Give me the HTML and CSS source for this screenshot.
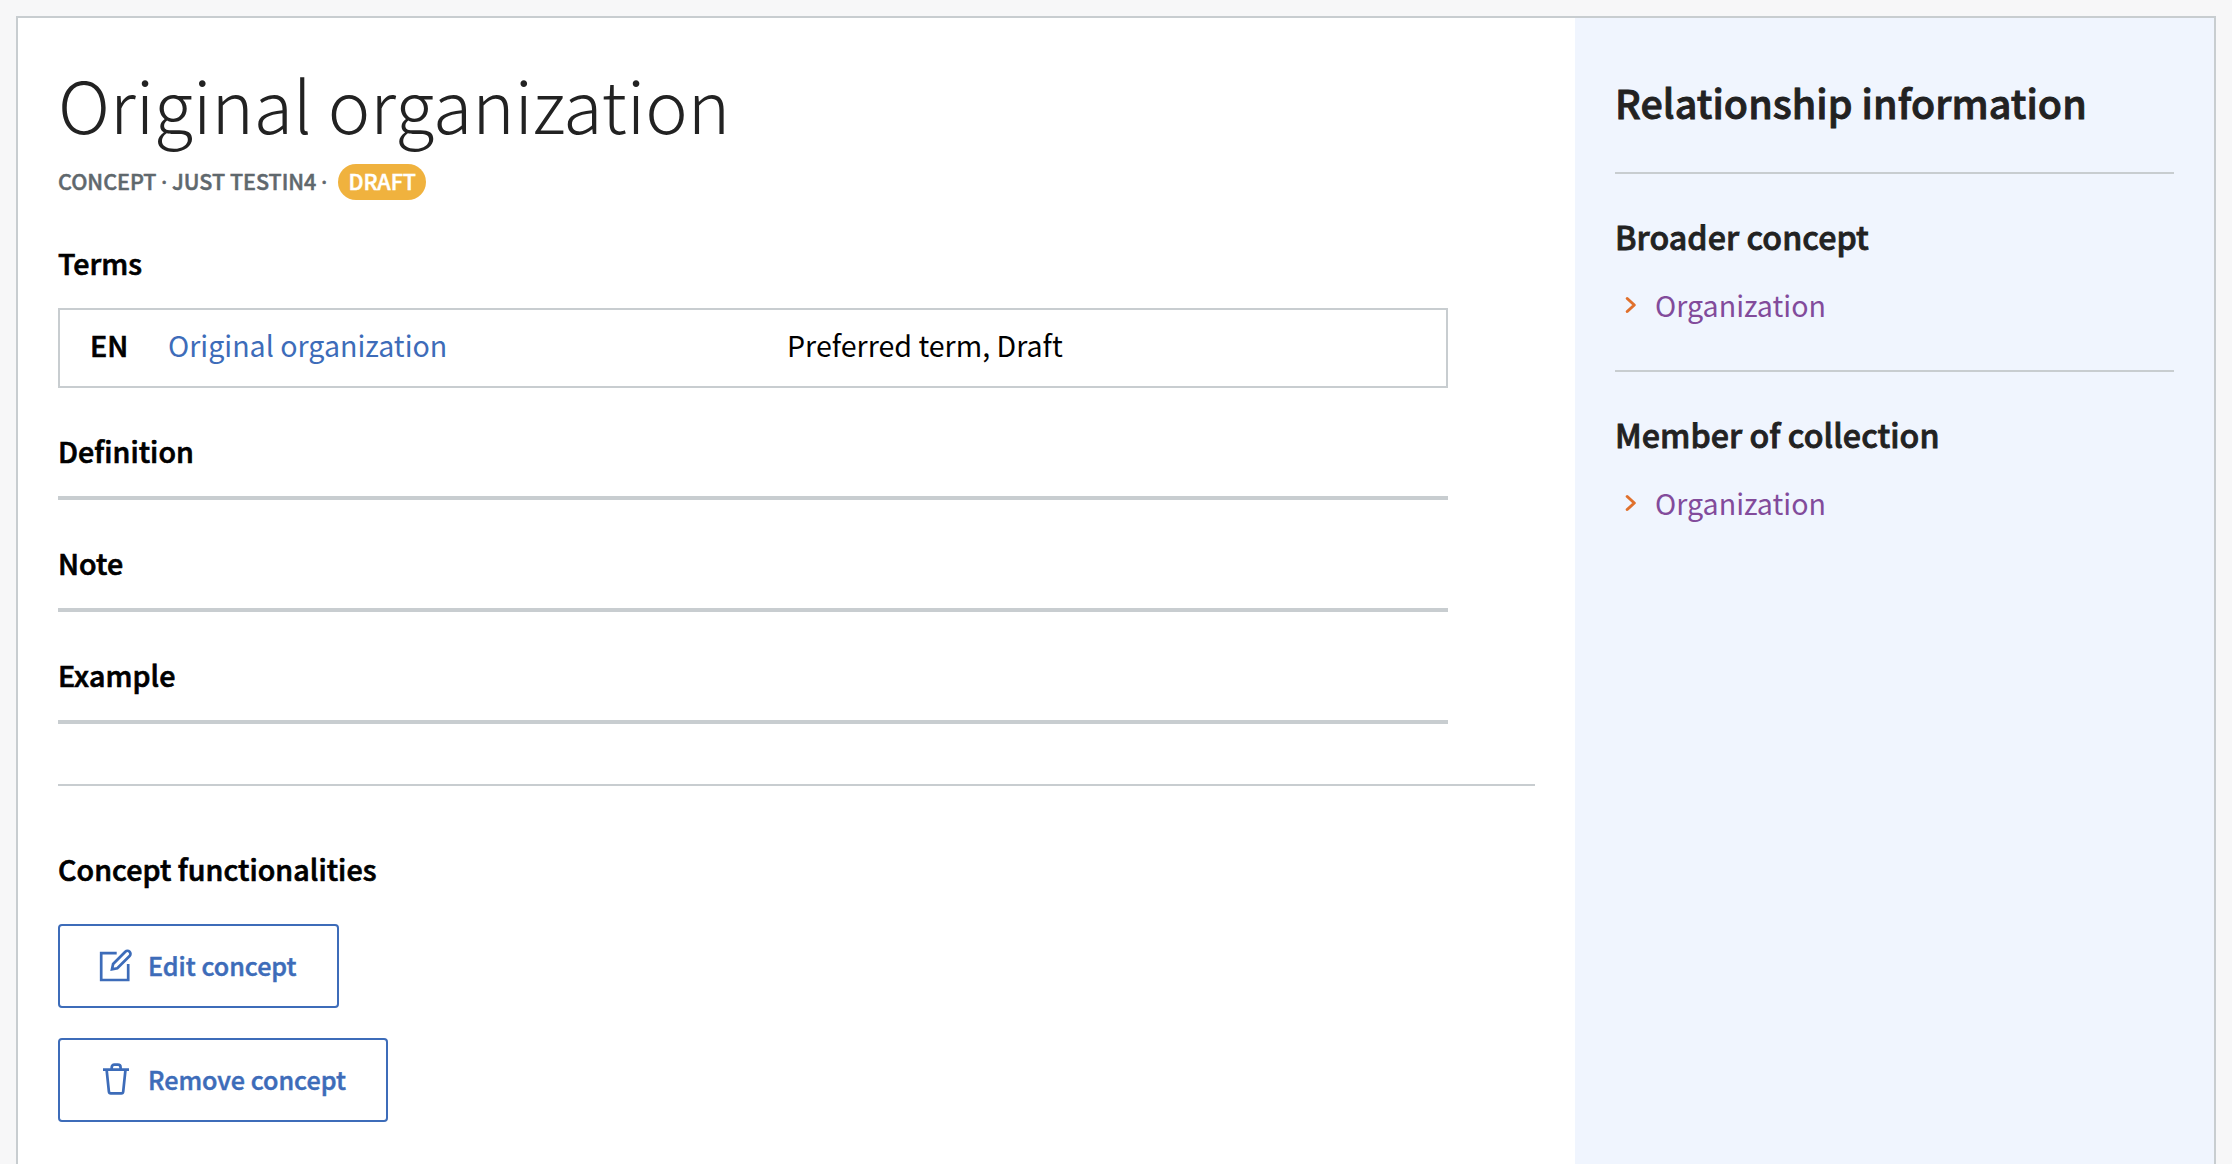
FILE: index.html
```html
<!DOCTYPE html>
<html lang="en">
<head>
<meta charset="utf-8">
<title>Original organization</title>
<link rel="stylesheet" href="styles.css">
</head>
<body>
<main class="page">
  <article class="content">
    <h1 class="title">Original organization</h1>
    <div class="meta">
      <span>CONCEPT <span class="dot">·</span> JUST TESTIN4 <span class="dot">·</span></span>
      <span class="badge">DRAFT</span>
    </div>
    <section class="block">
      <h2 class="label">Terms</h2>
      <div class="term">
        <b class="lang">EN</b>
        <a class="term-link">Original organization</a>
        <span>Preferred term, Draft</span>
      </div>
    </section>
    <section class="block empty"><h2 class="label">Definition</h2></section>
    <section class="block empty"><h2 class="label">Note</h2></section>
    <section class="block empty"><h2 class="label">Example</h2></section>
    <hr class="divider">
    <section class="actions">
      <h2 class="label">Concept functionalities</h2>
      <div class="buttons">
        <button class="btn"><svg class="icon" viewBox="0 0 34 34"><path d="M18.7 4.2H3.2V31h27V15"/><path d="M14 20.3l1.1-5.3L27.3 2.7a3 3 0 0 1 4.3 4.3L19.3 19.2z"/></svg><span class="btn-text">Edit concept</span></button>
        <button class="btn"><svg class="icon" viewBox="0 0 34 34"><path d="M5 6.7h26M13.7 6.5V4.5q0-2.8 2.8-2.8h3.3q2.8 0 2.8 2.8v2M8.7 7.5l2.2 21.2q.2 1.7 1.8 1.7h10.7q1.6 0 1.8-1.7L27.4 7.5"/></svg><span class="btn-text">Remove concept</span></button>
      </div>
    </section>
  </article>
  <aside class="side">
    <h2 class="side-title">Relationship information</h2>
    <section class="rel">
      <h3 class="rel-title">Broader concept</h3>
      <a class="rel-link"><svg class="chevron" viewBox="0 0 12 18"><path d="M2.2 2.5L9.3 9l-7.1 6.5"/></svg>Organization</a>
    </section>
    <section class="rel">
      <h3 class="rel-title">Member of collection</h3>
      <a class="rel-link"><svg class="chevron" viewBox="0 0 12 18"><path d="M2.2 2.5L9.3 9l-7.1 6.5"/></svg>Organization</a>
    </section>
  </aside>
</main>
</body>
</html>
```
FILE: styles.css
```css
* { box-sizing: border-box; margin: 0; padding: 0; }

body {
  height: 1164px;
  padding: 16px 16px 0;
  overflow: hidden;
  background: #f7f7f8;
  color: #000;
  font: 400 28.6px/40px "Noto Sans CJK JP", sans-serif;
}

.page {
  display: flex;
  height: 1148px;
  background: #fff;
  border: 2px solid #c8cdd0;
  border-bottom: 0;
}

.content { flex: 1; padding: 35px 40px 0; }

.title {
  font-weight: 200;
  font-size: 71.6px;
  line-height: 100px;
  color: #222;
}

.meta {
  display: flex;
  gap: 11px;
  margin-top: 11px;
  height: 36px;
  font-size: 21.5px;
  line-height: 34px;
  font-weight: 500;
  -webkit-text-stroke: 0.5px;
  color: #5f686d;
}

.dot { font-family: "Noto Sans", sans-serif; line-height: 1; }

.badge {
  padding: 0 10.5px;
  border-radius: 18px;
  background: #f0b23e;
  color: #fff;
  letter-spacing: -0.1px;
}

.label {
  padding-top: 1px;
  font-size: 28.6px;
  font-weight: 500;
  letter-spacing: 0.07px;
  -webkit-text-stroke: 0.7px;
}

.block { width: 1390px; margin-top: 42px; }

.empty { padding-bottom: 25px; border-bottom: 4px solid #c8cdd0; }

.term {
  display: grid;
  grid-template-columns: 78px 619px 1fr;
  align-items: center;
  height: 80px;
  margin-top: 25px;
  padding: 0 30px 6px;
  border: 2px solid #c8cdd0;
}

.lang {
  font-weight: 500;
  -webkit-text-stroke: 0.7px;
}

.term-link { color: #3d6cb9; }

.divider {
  margin-top: 60px;
  border: 0;
  border-top: 2px solid #c8cdd0;
}

.actions { margin-top: 62px; }

.buttons {
  display: flex;
  flex-direction: column;
  align-items: flex-start;
  gap: 30px;
  margin-top: 35px;
}

.btn {
  display: flex;
  align-items: center;
  gap: 16px;
  height: 84px;
  padding: 0 40px 0 38px;
  border: 2px solid #3d6cb9;
  border-radius: 4px;
  background: #fff;
  color: #3d6cb9;
  font: 500 25.1px/38px "Noto Sans CJK JP", sans-serif;
}

.btn-text {
  padding-bottom: 2px;
  -webkit-text-stroke: 0.5px;
}

.icon, .chevron { flex: none; fill: none; stroke: currentColor; }

.icon { width: 34px; height: 34px; stroke-width: 2.7; }

.side {
  width: 639px;
  padding: 60px 40px 0;
  background: #f0f5fe;
}

.side-title {
  padding-bottom: 46px;
  font-size: 39.4px;
  line-height: 48px;
  font-weight: 500;
  letter-spacing: 0.08px;
  -webkit-text-stroke: 0.9px;
  color: #222;
}

.rel {
  padding: 42px 0 45px;
  border-top: 2px solid #c8cdd0;
}

.rel-title {
  font-size: 32.2px;
  font-weight: 500;
  letter-spacing: 0.06px;
  -webkit-text-stroke: 0.8px;
  color: #222;
}

.rel-link {
  display: flex;
  align-items: center;
  gap: 18px;
  margin-top: 29px;
  padding-left: 10px;
  color: #824b9b;
}

.chevron {
  width: 12px;
  height: 18px;
  stroke: #e0702c;
  stroke-width: 3;
  stroke-linecap: round;
  stroke-linejoin: round;
}
```
